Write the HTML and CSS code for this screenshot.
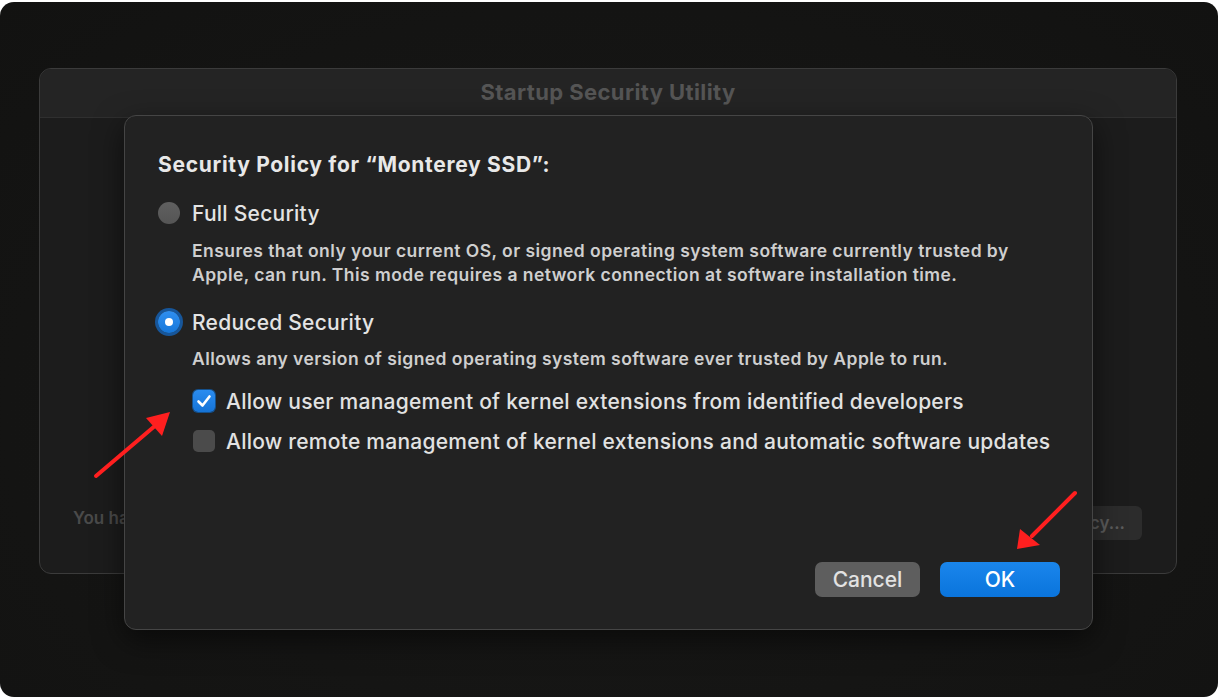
FILE: index.html
```html
<!DOCTYPE html>
<html lang="en">
<head>
<meta charset="utf-8">
<title>Startup Security Utility</title>
<link rel="stylesheet" href="styles.css">
</head>
<body>
<div class="screen">
  <div class="window">
    <div class="titlebar">Startup Security Utility</div>
    <div class="window-body">
      <div class="window-footer">
        <span class="window-note">You have not set a security policy for this disk.</span>
        <span class="window-btn">Security Policy...</span>
      </div>
    </div>
  </div>

  <div class="sheet">
    <div class="sheet-title">Security Policy for “Monterey SSD”:</div>

    <div class="option option-full">
      <span class="radio"></span>
      <span class="option-label">Full Security</span>
    </div>
    <p class="desc desc-full">Ensures that only your current OS, or signed operating system software currently trusted by<br>Apple, can run. This mode requires a network connection at software installation time.</p>

    <div class="option option-reduced">
      <span class="radio radio-on"><span class="radio-dot"></span></span>
      <span class="option-label">Reduced Security</span>
    </div>
    <p class="desc desc-reduced">Allows any version of signed operating system software ever trusted by Apple to run.</p>

    <div class="check check-first">
      <span class="box box-on">
        <svg viewBox="0 0 22 22" width="22" height="22"><path d="M5.5 11.5 L9.5 15.5 L16.5 6.5" fill="none" stroke="#fff" stroke-width="2.6" stroke-linecap="round" stroke-linejoin="round"/></svg>
      </span>
      <span class="check-label">Allow user management of kernel extensions from identified developers</span>
    </div>
    <div class="check check-second">
      <span class="box"></span>
      <span class="check-label">Allow remote management of kernel extensions and automatic software updates</span>
    </div>

    <div class="actions">
      <span class="btn btn-cancel">Cancel</span>
      <span class="btn btn-ok">OK</span>
    </div>
  </div>

  <svg class="arrows" width="1218" height="698" viewBox="0 0 1218 698">
    <line x1="96" y1="476" x2="156" y2="425" stroke="#ff1f1f" stroke-width="4" stroke-linecap="round"/>
    <polygon points="170,412 146,418 162,436" fill="#ff1f1f"/>
    <line x1="1075" y1="493" x2="1032" y2="536" stroke="#ff1f1f" stroke-width="4" stroke-linecap="round"/>
    <polygon points="1017,549 1020,529 1040,545" fill="#ff1f1f"/>
  </svg>
</div>
</body>
</html>
```

FILE: styles.css
```css
* { box-sizing: border-box; }

html, body {
  margin: 0;
  padding: 0;
  background: #ffffff;
}

body {
  width: 1218px;
  height: 698px;
  overflow: hidden;
  font-family: Inter, "Noto Sans", "Liberation Sans", sans-serif;
}

.screen {
  position: relative;
  margin-top: 2px;
  width: 1218px;
  height: 695px;
  border-radius: 14px;
  background: radial-gradient(ellipse at 50% 60%, #181817 0%, #141413 70%, #121211 100%);
  overflow: hidden;
}

/* background window */
.window {
  position: absolute;
  left: 39px;
  top: 66px;
  width: 1138px;
  height: 506px;
  border: 1px solid #3b3b3b;
  border-radius: 12px;
  background: #1c1c1c;
  display: flex;
  flex-direction: column;
  overflow: hidden;
}

.titlebar {
  height: 49px;
  flex: none;
  background: #242424;
  border-bottom: 1px solid #2f2f2f;
  color: #555555;
  font-weight: 700;
  font-size: 22px;
  letter-spacing: 0.4px;
  display: flex;
  align-items: center;
  justify-content: center;
  padding-bottom: 3px;
}

.window-body {
  flex: 1;
  display: flex;
  flex-direction: column;
  justify-content: flex-end;
  padding: 0 34px 33px 33px;
}

.window-footer {
  display: flex;
  justify-content: space-between;
  align-items: center;
}

.window-note {
  color: #4a4a4a;
  font-size: 17px;
  font-weight: 600;
  padding-bottom: 10px;
}

.window-btn {
  height: 34px;
  padding: 0 17px 0 20px;
  border-radius: 6px;
  background: #2c2c2c;
  color: #5c5c5c;
  font-size: 17px;
  font-weight: 600;
  display: flex;
  align-items: center;
}

/* sheet dialog */
.sheet {
  position: absolute;
  left: 124px;
  top: 113px;
  width: 969px;
  height: 515px;
  border: 1px solid #454545;
  border-radius: 12px;
  background: #222222;
  box-shadow: 0 10px 30px rgba(0,0,0,0.55);
  padding: 37px 32px 32px 33px;
  display: flex;
  flex-direction: column;
  color: #e6e6e6;
}

.sheet-title {
  font-size: 21px;
  font-weight: 700;
  line-height: 24px;
  letter-spacing: 0.7px;
  color: #e8e8e8;
}

.option {
  display: flex;
  align-items: center;
  height: 28px;
  gap: 12px;
}

.option-full { margin-top: 22px; }
.option-reduced { margin-top: 21px; }

.radio {
  width: 22px;
  height: 22px;
  border-radius: 50%;
  background: linear-gradient(#606060, #555555);
  flex: none;
  display: flex;
  align-items: center;
  justify-content: center;
}

.radio-on {
  background: linear-gradient(#2f8ff0, #1677da);
  box-shadow: 0 0 0 3px #17569a;
}

.radio-dot {
  width: 8px;
  height: 8px;
  border-radius: 50%;
  background: #ffffff;
}

.option-label {
  font-size: 21px;
  font-weight: 500;
  letter-spacing: 0.25px;
  color: #e4e4e4;
}

.desc {
  margin: 0;
  padding-left: 34px;
  font-size: 17.5px;
  font-weight: 600;
  line-height: 24px;
  letter-spacing: 0.45px;
  color: #cfcfcf;
}

.desc-full { margin-top: 12px; }
.desc-reduced { margin-top: 11px; }

.check {
  display: flex;
  align-items: center;
  height: 30px;
  gap: 11px;
  padding-left: 35px;
}

.check-first { margin-top: 15px; }
.check-second { margin-top: 10px; }

.box {
  width: 22px;
  height: 22px;
  border-radius: 5px;
  background: #4b4b4b;
  flex: none;
  display: flex;
}

.box-on {
  background: linear-gradient(#2a8cf0, #1573d6);
  box-shadow: 0 0 0 1px #14508c;
}

.check-label {
  font-size: 21px;
  font-weight: 500;
  letter-spacing: 0.25px;
  color: #e2e2e2;
}

.actions {
  margin-top: auto;
  display: flex;
  justify-content: flex-end;
  gap: 20px;
}

.btn {
  height: 35px;
  border-radius: 7px;
  display: flex;
  align-items: center;
  justify-content: center;
  font-size: 21px;
  font-weight: 500;
}

.btn-cancel {
  width: 105px;
  background: #5e5e5e;
  color: #e2e2e2;
}

.btn-ok {
  width: 120px;
  background: linear-gradient(#1a86ec, #0a74dc);
  color: #ffffff;
}

.arrows {
  position: absolute;
  left: 0;
  top: -2px;
  pointer-events: none;
}
```
